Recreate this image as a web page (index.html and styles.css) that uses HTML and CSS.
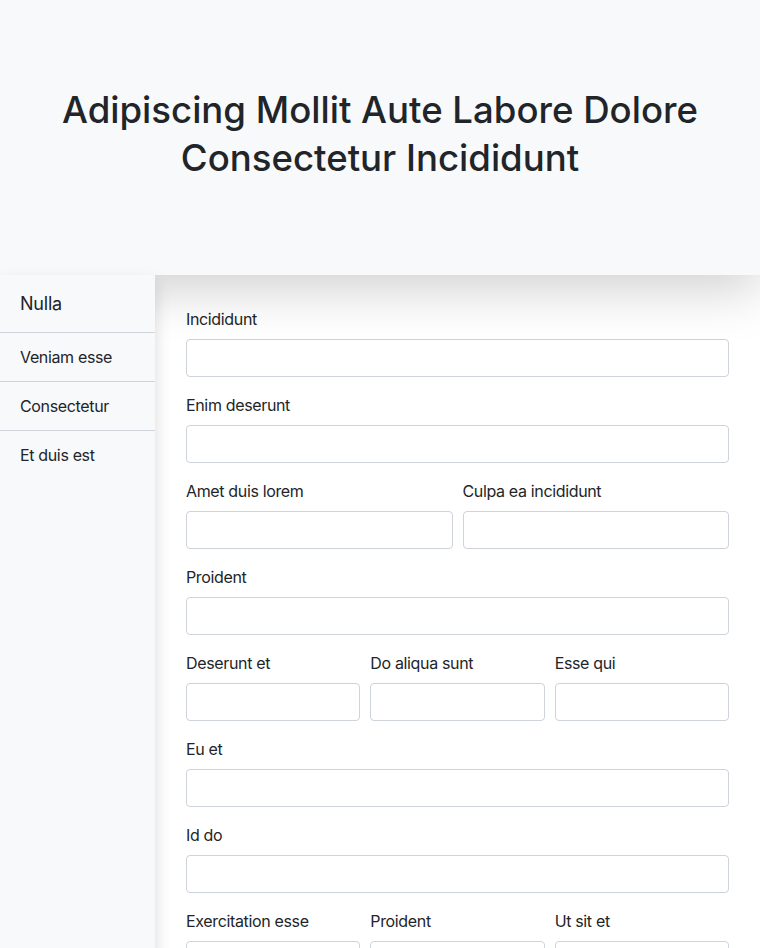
FILE: index.html
```html
<!DOCTYPE html>
<html lang="en">
<head>
<meta charset="utf-8">
<title>Form</title>
<link rel="stylesheet" href="styles.css">
</head>
<body>
<header class="hero">
  <h1 class="hero-title">Adipiscing Mollit Aute Labore Dolore Consectetur Incididunt</h1>
</header>
<div class="layout">
  <nav class="sidebar">
    <div class="sidebar-head">Nulla</div>
    <a class="sidebar-item">Veniam esse</a>
    <a class="sidebar-item">Consectetur</a>
    <a class="sidebar-item last">Et duis est</a>
  </nav>
  <main class="content">
    <form class="form">
      <div class="row one"><div class="field"><label>Incididunt</label><input type="text"></div></div>
      <div class="row one"><div class="field"><label>Enim deserunt</label><input type="text"></div></div>
      <div class="row two">
        <div class="field"><label>Amet duis lorem</label><input type="text"></div>
        <div class="field"><label>Culpa ea incididunt</label><input type="text"></div>
      </div>
      <div class="row one"><div class="field"><label>Proident</label><input type="text"></div></div>
      <div class="row three">
        <div class="field"><label>Deserunt et</label><input type="text"></div>
        <div class="field"><label>Do aliqua sunt</label><input type="text"></div>
        <div class="field"><label>Esse qui</label><input type="text"></div>
      </div>
      <div class="row one"><div class="field"><label>Eu et</label><input type="text"></div></div>
      <div class="row one"><div class="field"><label>Id do</label><input type="text"></div></div>
      <div class="row three">
        <div class="field"><label>Exercitation esse</label><input type="text"></div>
        <div class="field"><label>Proident</label><input type="text"></div>
        <div class="field"><label>Ut sit et</label><input type="text"></div>
      </div>
    </form>
  </main>
</div>
</body>
</html>
```
FILE: styles.css
```css
* { box-sizing: border-box; }
html, body { margin: 0; padding: 0; }
body {
  font-family: Inter, "Noto Sans", "Liberation Sans", sans-serif;
  color: #212529;
  font-size: 16px;
  line-height: 1.5;
  letter-spacing: -0.35px;
  background: #fff;
  overflow: hidden;
}
.hero {
  position: relative;
  z-index: 1;
  background: #f8f9fa;
  padding: 86px 40px 85px;
  box-shadow: 0 16px 48px rgba(0, 0, 0, 0.175);
  text-align: center;
}
.hero-title {
  margin: 0 0 8px;
  font-size: 36.6px;
  font-weight: 500;
  line-height: 48px;
  letter-spacing: 0;
}
.layout {
  display: flex;
  min-height: 700px;
}
.sidebar {
  position: relative;
  z-index: 2;
  width: 155px;
  flex: 0 0 155px;
  background: #f8f9fa;
  box-shadow: 0 8px 16px rgba(0, 0, 0, 0.15);
  display: flex;
  flex-direction: column;
}
.sidebar-head {
  font-size: 18px;
  padding: 16px 20px 16px;
  line-height: 25px;
  border-bottom: 1px solid #ced4da;
  letter-spacing: -0.2px;
}
.sidebar-item {
  display: block;
  padding: 12px 20px;
  line-height: 24px;
  border-bottom: 1px solid #ced4da;
  color: #212529;
}
.sidebar-item.last { border-bottom: 0; }
.content {
  flex: 1;
  background: #fff;
  padding: 32px 31px 0;
}
.form { display: flex; flex-direction: column; }
.row {
  display: grid;
  gap: 10px;
  margin-bottom: 16px;
}
.row.one { grid-template-columns: 1fr; }
.row.two { grid-template-columns: 1fr 1fr; }
.row.three { grid-template-columns: 1fr 1fr 1fr; }
.field label {
  display: block;
  margin-bottom: 8px;
  line-height: 24px;
}
.field input {
  display: block;
  width: 100%;
  height: 38px;
  border: 1px solid #ced4da;
  border-radius: 4px;
  background: #fff;
  font: inherit;
  padding: 6px 12px;
}
```
